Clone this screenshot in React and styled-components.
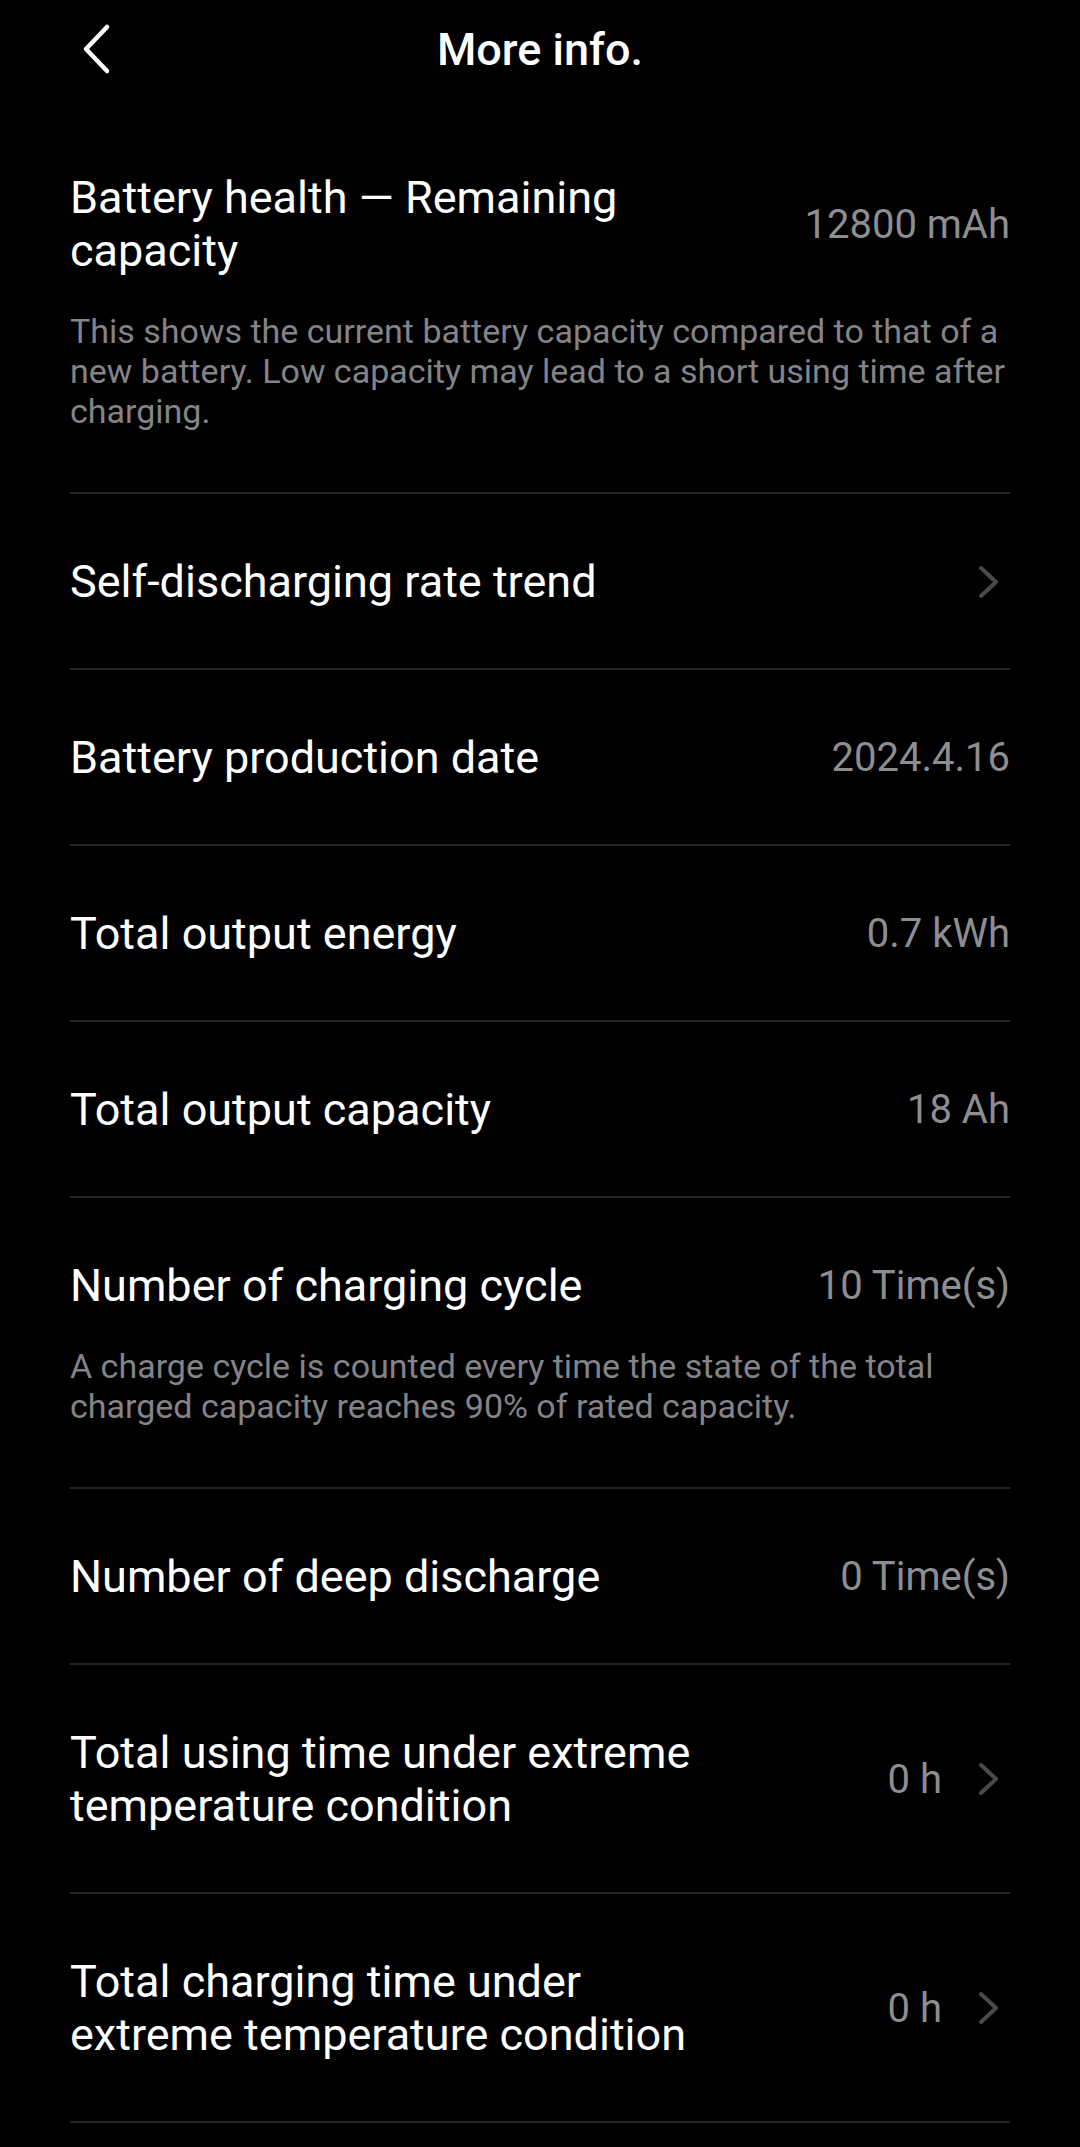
import React from "react";
import styled, { createGlobalStyle } from "styled-components";

const GlobalStyle = createGlobalStyle`
  html, body {
    margin: 0;
    padding: 0;
    background: #000;
  }
  body {
    font-family: Roboto, "Noto Sans", sans-serif;
    color: #fff;
    -webkit-font-smoothing: antialiased;
  }
`;

const Screen = styled.div`
  width: 1080px;
  min-height: 2147px;
  background: #000;
`;

const Header = styled.header`
  position: relative;
  height: 98px;
  display: flex;
  align-items: center;
  justify-content: center;
`;

const BackButton = styled.button`
  position: absolute;
  left: 70px;
  top: 18px;
  width: 52px;
  height: 62px;
  padding: 0;
  border: 0;
  background: none;
  display: flex;
  align-items: center;
  justify-content: center;
  cursor: pointer;
`;

const Title = styled.h1`
  margin: 0;
  font-size: 45px;
  font-weight: 500;
  color: #fff;
`;

const List = styled.ul`
  list-style: none;
  margin: 12px 0 0;
  padding: 0 70px;
`;

const Item = styled.li`
  padding: 61px 0 ${(p) => (p.$note ? "61px" : "60px")};
  border-bottom: 2px solid #262626;
`;

const Row = styled.div`
  display: flex;
  align-items: center;
  gap: 40px;
`;

const Label = styled.span`
  flex: 1;
  max-width: 650px;
  font-size: 45px;
  line-height: 53px;
  color: #fff;
`;

const Trail = styled.div`
  display: flex;
  align-items: center;
  gap: 36px;
  margin-left: auto;
`;

const Value = styled.span`
  font-size: 40px;
  line-height: 53px;
  color: #8e8e92;
  white-space: nowrap;
`;

const Note = styled.p`
  margin: 34px 0 0;
  font-size: 34px;
  line-height: 40px;
  color: #838388;
`;

const ChevronWrap = styled.span`
  display: flex;
  width: 22px;
  margin-right: 10px;
`;

const Chevron = () => (
  <ChevronWrap>
    <svg width="22" height="34" viewBox="0 0 22 34" fill="none">
      <path
        d="M3 3 L18 17 L3 31"
        stroke="#4a4a4a"
        strokeWidth="4"
        strokeLinecap="round"
        strokeLinejoin="round"
      />
    </svg>
  </ChevronWrap>
);

const items = [
  {
    label: "Battery health — Remaining capacity",
    value: "12800 mAh",
    note: "This shows the current battery capacity compared to that of a new battery. Low capacity may lead to a short using time after charging.",
  },
  { label: "Self-discharging rate trend", arrow: true },
  { label: "Battery production date", value: "2024.4.16" },
  { label: "Total output energy", value: "0.7 kWh" },
  { label: "Total output capacity", value: "18 Ah" },
  {
    label: "Number of charging cycle",
    value: "10 Time(s)",
    note: "A charge cycle is counted every time the state of the total charged capacity reaches 90% of rated capacity.",
  },
  { label: "Number of deep discharge", value: "0 Time(s)" },
  {
    label: "Total using time under extreme temperature condition",
    value: "0 h",
    arrow: true,
  },
  {
    label: "Total charging time under extreme temperature condition",
    value: "0 h",
    arrow: true,
  },
];

const App = () => {
  return (
    <Screen>
      <GlobalStyle />
      <Header>
        <BackButton aria-label="Back">
          <svg width="32" height="52" viewBox="0 0 32 52" fill="none">
            <path
              d="M27 4 L6 26 L27 48"
              stroke="#fff"
              strokeWidth="4.5"
              strokeLinecap="round"
              strokeLinejoin="round"
            />
          </svg>
        </BackButton>
        <Title>More info.</Title>
      </Header>
      <List>
        {items.map((item) => (
          <Item key={item.label} $note={!!item.note}>
            <Row>
              <Label>{item.label}</Label>
              <Trail>
                {item.value && <Value>{item.value}</Value>}
                {item.arrow && <Chevron />}
              </Trail>
            </Row>
            {item.note && <Note>{item.note}</Note>}
          </Item>
        ))}
      </List>
    </Screen>
  );
};

export default App;
